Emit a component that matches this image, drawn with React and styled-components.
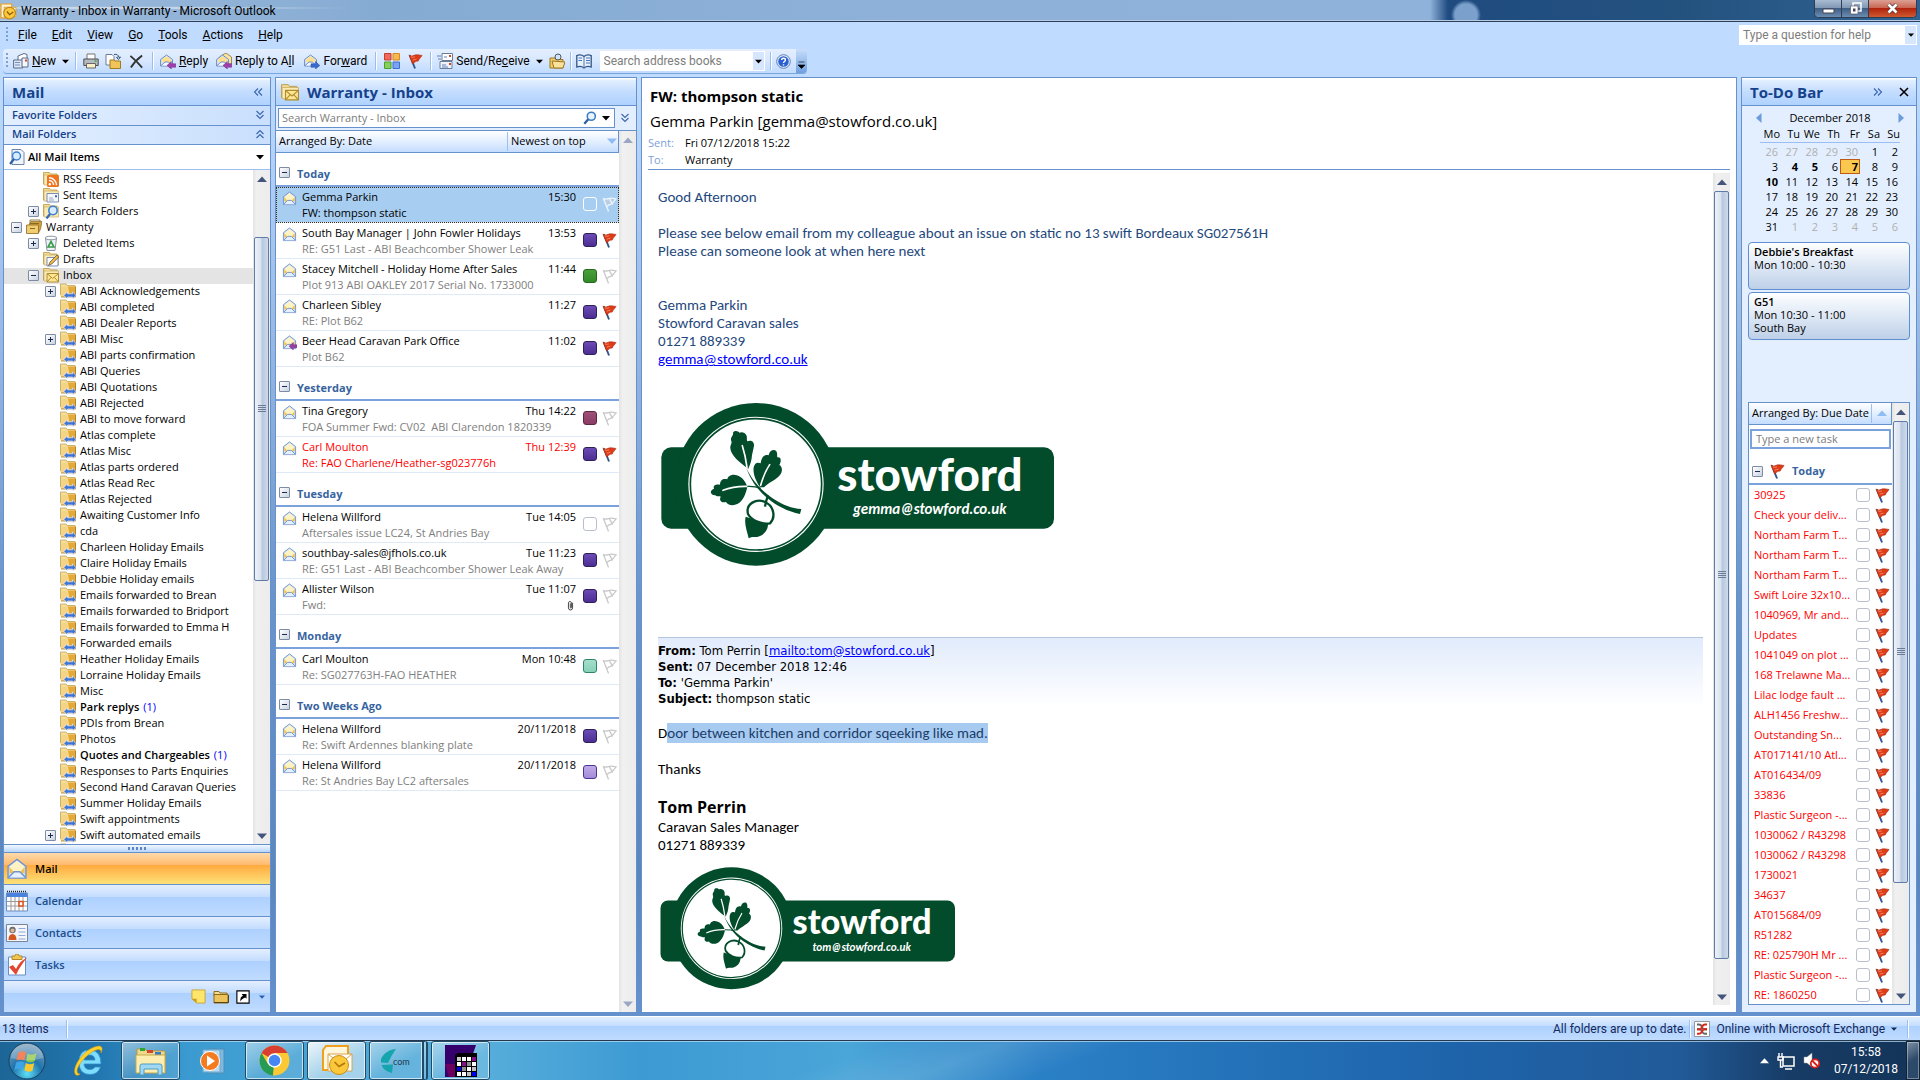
import styled, { createGlobalStyle, css } from 'styled-components'

const ui = '"Open Sans", "Noto Sans", sans-serif'
const chrome = 'Roboto, "Open Sans", sans-serif'
const calibri = 'Carlito, Lato, sans-serif'
const tahoma = '"DejaVu Sans Condensed", "DejaVu Sans", sans-serif'

const GlobalStyle = createGlobalStyle`
  * { box-sizing: border-box; }
  html, body, #root { height: 100%; margin: 0; }
  body { overflow: hidden; font: 11px/16px ${ui}; color: #000; }
  button, input { font: inherit; color: inherit; border: 0; padding: 0; margin: 0; background: none; }
  button { display: flex; align-items: center; cursor: pointer; white-space: nowrap; }
  ul { list-style: none; margin: 0; padding: 0; }
  h1, h2, h3, p { margin: 0; font-size: inherit; }
  svg { display: block; flex: none; }
`

/* ---------- data ---------- */

const menus = [['F', 'ile'], ['E', 'dit'], ['V', 'iew'], ['G', 'o'], ['T', 'ools'], ['A', 'ctions'], ['H', 'elp']]

const topFolders = [
  { name: 'RSS Feeds', icon: 'rss', level: 1 },
  { name: 'Sent Items', icon: 'sent', level: 1 },
  { name: 'Search Folders', icon: 'search', level: 1, toggle: '+' },
  { name: 'Warranty', icon: 'store', level: 0, toggle: '-' },
  { name: 'Deleted Items', icon: 'bin', level: 1, toggle: '+' },
  { name: 'Drafts', icon: 'drafts', level: 1 },
  { name: 'Inbox', icon: 'inbox', level: 1, toggle: '-', active: true },
]

const subFolders = [
  '+ABI Acknowledgements', 'ABI completed', 'ABI Dealer Reports', '+ABI Misc', 'ABI parts confirmation',
  'ABI Queries', 'ABI Quotations', 'ABI Rejected', 'ABI to move forward', 'Atlas complete', 'Atlas Misc',
  'Atlas parts ordered', 'Atlas Read Rec', 'Atlas Rejected', 'Awaiting Customer Info', 'cda',
  'Charleen Holiday Emails', 'Claire Holiday Emails', 'Debbie Holiday emails', 'Emails forwarded to Brean',
  'Emails forwarded to Bridport', 'Emails forwarded to Emma H', 'Forwarded emails', 'Heather Holiday Emails',
  'Lorraine Holiday Emails', 'Misc', 'Park replys|1', 'PDIs from Brean', 'Photos', 'Quotes and Chargeables|1',
  'Responses to Parts Enquiries', 'Second Hand Caravan Queries', 'Summer Holiday Emails',
  'Swift appointments', '+Swift automated emails', '',
].map((s) => {
  const [name, unread] = s.replace('+', '').split('|')
  return { name, unread, icon: 'shared', level: 2, toggle: s[0] === '+' ? '+' : null }
})

const folders = [...topFolders, ...subFolders]

const purple = ['#6c4bb5', '#4c2f93', '#30205a']
const green = ['#4aa03a', '#33882a', '#246a1e']
const plum = ['#a05078', '#8a3c64', '#5c2742']
const mint = ['#a4dfcb', '#86d2b8', '#2f8468']
const lilac = ['#c0abe8', '#a48ad8', '#4a3593']

const groups = [
  { title: 'Today', mails: [
    { from: 'Gemma Parkin', subject: 'FW: thompson static', time: '15:30', selected: true },
    { from: 'South Bay Manager | John Fowler Holidays', subject: 'RE: G51 Last - ABI Beachcomber Shower Leak', time: '13:53', cat: purple, flag: true },
    { from: 'Stacey Mitchell - Holiday Home After Sales', subject: 'Plot 913 ABI OAKLEY 2017 Serial No. 1733000', time: '11:44', cat: green },
    { from: 'Charleen Sibley', subject: 'RE: Plot B62', time: '11:27', cat: purple, flag: true },
    { from: 'Beer Head Caravan Park Office', subject: 'Plot B62', time: '11:02', cat: purple, flag: true, replied: true },
  ] },
  { title: 'Yesterday', mails: [
    { from: 'Tina Gregory', subject: 'FOA Summer Fwd: CV02  ABI Clarendon 1820339', time: 'Thu 14:22', cat: plum },
    { from: 'Carl Moulton', subject: 'Re: FAO Charlene/Heather-sg023776h', time: 'Thu 12:39', cat: purple, flag: true, overdue: true },
  ] },
  { title: 'Tuesday', mails: [
    { from: 'Helena Willford', subject: 'Aftersales issue LC24, St Andries Bay', time: 'Tue 14:05' },
    { from: 'southbay-sales@jfhols.co.uk', subject: 'RE: G51 Last - ABI Beachcomber Shower Leak Away', time: 'Tue 11:23', cat: purple },
    { from: 'Allister Wilson', subject: 'Fwd:', time: 'Tue 11:07', cat: purple, attachment: true },
  ] },
  { title: 'Monday', mails: [
    { from: 'Carl Moulton', subject: 'Re: SG027763H-FAO HEATHER', time: 'Mon 10:48', cat: mint },
  ] },
  { title: 'Two Weeks Ago', mails: [
    { from: 'Helena Willford', subject: 'Re: Swift Ardennes blanking plate', time: '20/11/2018', cat: purple },
    { from: 'Helena Willford', subject: 'Re: St Andries Bay LC2 aftersales', time: '20/11/2018', cat: lilac },
  ] },
]

const weeks = [
  [26, 27, 28, 29, 30, 1, 2],
  [3, 4, 5, 6, 7, 8, 9],
  [10, 11, 12, 13, 14, 15, 16],
  [17, 18, 19, 20, 21, 22, 23],
  [24, 25, 26, 27, 28, 29, 30],
  [31, 1, 2, 3, 4, 5, 6],
]
const busyDays = [4, 5, 7, 10]

const tasks = [
  '30925', 'Check your deliv...', 'Northam Farm T...', 'Northam Farm T...', 'Northam Farm T...',
  'Swift Loire 32x10...', '1040969, Mr and...', 'Updates', '1041049 on plot ...', '168 Trelawne Ma...',
  'Lilac lodge fault ...', 'ALH1456 Freshw...', 'Outstanding Sn...', 'AT017141/10 Atl...', 'AT016434/09',
  '33836', 'Plastic Surgeon -...', '1030062 / R43298', '1030062 / R43298', '1730021', '34637',
  'AT015684/09', 'R51282', 'RE: 025790H Mr ...', 'Plastic Surgeon -...', 'RE: 1860250',
]

/* ---------- icons ---------- */

const Icon = ({ size = 16, box = 16, children }) => (
  <svg width={size} height={size} viewBox={`0 0 ${box} ${box}`} aria-hidden="true">{children}</svg>
)

const Flag = ({ on = true, pale }) => (
  <Icon size={15}>
    {on ? (
      <>
        <path d="M2 1.500 7.500 15.500" stroke="#2d5590" strokeWidth="2" />
        <path d="M1 1c2 1.500 3.500 1.300 5.500.4S11 .8 15 1.600C13.500 4 12 4.900 10.800 7.600 9 7.300 7 8.500 5 10.800Z" fill="#df3b17" stroke="#a32a12" strokeWidth=".6" />
        <path d="M3 3c2 .8 3 .6 4.500 0M5 6.500c1.500 0 2.500-1 4-1" stroke="#f58a66" fill="none" />
      </>
    ) : (
      <path d="M1.500 1.500 7 15.500 M1 1.500c2.500 1.500 4 .8 5.500.2s4.500-.6 8.500.2C13.500 4 12 4.900 10.800 7.600 9 7.300 7 8 5 10.500M8 2l2.500 4.500" stroke={pale ? '#eef4fb' : '#c9c9c9'} strokeWidth="1.400" fill={pale ? '#b9cfe6' : 'none'} />
    )}
  </Icon>
)

const OpenMail = ({ size = 15, replied }) => (
  <Icon size={size}>
    <path d="M1.500 6 8 1l6.500 5v8.500h-13Z" fill="#cfe0f7" stroke="#6f94cf" />
    <path d="M3 6 8 2l5 4v4H3Z" fill="#fff3c4" />
    <path d="M2.500 6.500 5.500 10h5l3-3.500v4.500h-11Z" fill="#f2c14b" />
    <path d="M1.800 14.200 6 10h4l4.200 4.200" fill="#e6f0fd" stroke="#6f94cf" />
    {replied && <path d="M7.500 12 12 8v2.500h4v3h-4V16Z" fill="#9a3fa8" stroke="#6f2a80" strokeWidth=".5" />}
  </Icon>
)

const ActionMail = ({ kind }) => (
  <Icon>
    {kind === 'all' && <path d="M4 3.500 10 0l5.500 4v7H4Z" fill="#f8e3a0" stroke="#9c8a52" />}
    <path d="M.6 6.500 6.500 2l6 4.500V13H.6Z" fill="#dce9fa" stroke="#6d8cc0" />
    <path d="M2 6.500 6.500 3.200 11 6.500v2l-4.500 1.800L2 8.500Z" fill="#ffe08a" />
    <path d="M1 12.600 5 9h3.500l3.500 3.600" fill="#f4f8ff" stroke="#6d8cc0" />
    {kind === 'forward'
      ? <path d="M15.800 12.500 11.500 8.500v2.300H7v3.400h4.500V16Z" fill="#3a6bd0" stroke="#2148a0" strokeWidth=".5" />
      : <path d="M7 12.500 11.300 8.500v2.300h4.500v3.400h-4.500V16Z" fill="#a23fae" stroke="#6f2a80" strokeWidth=".5" />}
  </Icon>
)

const FolderBase = () => (
  <>
    <path d="M.5 1.500h6l1 1.500H14v10H.5Z" fill="#f3dd92" stroke="#b79847" strokeWidth=".8" />
    <path d="M1 4h14.500v10H1Z" fill="#f9ebb8" stroke="#c4a352" strokeWidth=".6" />
  </>
)

const FolderIcon = ({ kind, size = 16 }) => (
  <Icon size={size}>
    {kind === 'bin' ? (
      <>
        <path d="M2.500 3h11l-1.500 12.500H4Z" fill="#eef2f6" stroke="#8993a0" />
        <ellipse cx="8" cy="3" rx="5.800" ry="1.800" fill="#fff" stroke="#8993a0" />
        <path d="m8 6.500 3 5.500H5Z" fill="none" stroke="#3a9a48" strokeWidth="1.600" />
      </>
    ) : kind === 'store' ? (
      <>
        <path d="M4 1h10v4H4Z" fill="#fff" stroke="#8a7a48" />
        <path d="m3 6 2-3.500h11L14.500 10l-2 4Z" fill="#cfa140" stroke="#8a6a20" strokeWidth=".7" />
        <path d="M.5 6h12v8.500H.5Z" fill="#f0cd70" stroke="#8a6a20" strokeWidth=".8" />
        <path d="M4 9.500h5M4 4.500h9" stroke="#8a6a20" />
      </>
    ) : kind === 'plain' ? (
      <>
        <path d="M1 2.500h5l1 1.500h7v3H1Z" fill="#f6dd8c" stroke="#8c6a1c" />
        <path d="M1 5.500h14v8.500H1Z" fill="#edc35c" stroke="#8c6a1c" />
        <path d="M1 13.500h14.500V6" fill="none" stroke="#5a430e" />
      </>
    ) : (
      <>
        {kind !== 'shared' && <FolderBase />}
        {kind === 'shared' && (
          <>
            <path d="M.5 1h5.500l1 1.500h8V12H.5Z" fill="#f6e2a0" stroke="#b79847" strokeWidth=".7" />
            <path d="M1 3.500h14.500V14H1Z" fill="#f5d585" />
            <path d="M8 3.500h7.500V14H10Z" fill="#e3a93a" />
            <path d="M15.500 3.500V14H1" fill="none" stroke="#a8761c" strokeWidth=".8" />
            <path d="M3.800 12.500 7.500 8.800v2h5v-2l3.500 3.700-3.500 3.300v-1.800h-5v1.800Z" fill="#3f74d6" stroke="#f0f5fd" strokeWidth=".6" />
          </>
        )}
        {kind === 'rss' && (
          <>
            <rect x="4" y="4" width="12" height="12" rx="1.500" fill="#ee7420" />
            <circle cx="6.800" cy="13.200" r="1.200" fill="#fff" />
            <path d="M6 9.500a4.500 4.500 0 0 1 4.500 4.500M6 6.700a7.500 7.500 0 0 1 7.500 7.500" stroke="#fff" strokeWidth="1.400" fill="none" />
          </>
        )}
        {kind === 'sent' && (
          <>
            <path d="M4 6.500h11.500V15H4Z" fill="#f4f7fc" stroke="#7c8fae" />
            <path d="M12 8.200h2v2h-2Z" fill="#3c64b4" />
            <path d="M6 11h4M6 13h5" stroke="#9aa9c2" />
          </>
        )}
        {kind === 'inbox' && (
          <>
            <path d="M4 6.500h11.500V15H4Z" fill="#ffe795" stroke="#b08c2c" />
            <path d="m4 6.500 5.700 5 5.800-5M4 15l4-4.500M15.500 15l-4-4.500" fill="none" stroke="#b08c2c" />
          </>
        )}
        {kind === 'drafts' && (
          <>
            <path d="M4 6.500h11V15H4Z" fill="#fff" stroke="#7c8fae" />
            <path d="M5.500 14.500 7 11l7-7 1.800 2-7 7Z" fill="#f0b840" stroke="#4a4a4a" strokeWidth=".7" />
          </>
        )}
        {kind === 'search' && (
          <>
            <circle cx="10" cy="7.500" r="4.200" fill="#d8ecff" stroke="#3e82cf" strokeWidth="1.600" />
            <path d="m7 11-3.500 4.500" stroke="#3567b5" strokeWidth="2.200" />
          </>
        )}
      </>
    )}
  </Icon>
)

const Chevrons = ({ dir = 'left', color = '#3b66a8' }) => {
  const turn = { left: 0, up: 90, right: 180, down: 270 }[dir]
  return (
    <svg width="10" height="10" viewBox="0 0 10 10" aria-hidden="true">
      <path d="M5 1.500 1.500 5 5 8.500M9 1.500 5.500 5 9 8.500" transform={`rotate(${turn} 5 5)`} fill="none" stroke={color} strokeWidth="1.100" />
    </svg>
  )
}

const Arrow = ({ dir = 'down', color = '#000', w = 7 }) => {
  const d = { down: 'M0 2.500h10L5 8Z', up: 'M0 8h10L5 2.500Z', left: 'M7.500 0v10L2 5Z', right: 'M2.500 0v10L8 5Z' }[dir]
  return <svg width={w} height={w} viewBox="0 0 10 10" aria-hidden="true"><path d={d} fill={color} /></svg>
}

const Lens = () => (
  <Icon size={14}>
    <circle cx="9.500" cy="6" r="4.600" fill="#e8f4ff" stroke="#3d7cc4" strokeWidth="1.800" />
    <path d="m6 9.500-4.500 5" stroke="#2f5fa6" strokeWidth="2.600" />
  </Icon>
)

const Crest = ({ width, email }) => (
  <svg width={width} viewBox="54 60 1200 507" role="img" aria-label={`stowford ${email}`}>
    <rect x="64" y="202" width="1178" height="244" rx="30" fill="#024b2b" />
    <circle cx="348" cy="313" r="244" fill="#024b2b" />
    <circle cx="348" cy="313" r="203" fill="#fff" />
    <circle cx="348" cy="313" r="197" fill="none" stroke="#024b2b" strokeWidth="5" />
    <g fill="#024b2b">
      <path d="M325 266C300 250 272 225 271 205 270 195 278 190 273 180 272 168 281 168 279 158 282 150 296 153 298 158 305 154 318 158 320 168 322 175 319 178 322 184 335 178 343 186 342 197 340 210 335 225 335 235 333 250 328 258 325 266Z" />
      <path d="M360 322C350 305 338 285 341 262 345 248 352 246 362 250 364 235 370 222 386 226 388 212 400 207 408 212 414 220 410 226 412 232 422 230 426 240 418 255 428 260 428 275 420 285 405 302 385 308 372 322Z" />
      <path d="M322 320C315 300 300 285 285 285 275 282 262 290 262 298 250 294 240 300 240 314 228 312 218 316 222 326 208 332 210 344 226 346 232 352 238 346 242 350 236 362 246 370 258 366 262 376 280 378 292 372 310 362 318 340 322 320Z" />
      <path d="M318 262C340 310 370 335 400 356 430 376 455 384 484 387L480 402C450 396 418 382 394 364 364 342 335 310 318 262Z" />
      <path d="M317 410C312 430 320 450 326 475 335 468 350 474 360 468 378 460 384 445 384 432Z" />
    </g>
    <g fill="none" stroke="#fff" strokeWidth="5" strokeLinecap="round">
      <path d="M307 197Q316 225 321 262" />
      <path d="M389 254Q372 280 362 316" />
      <path d="M249 331Q280 318 322 319" />
    </g>
    <path d="M322 319Q345 318 362 325" fill="none" stroke="#024b2b" strokeWidth="4" />
    <path d="M324 402C316 370 350 355 375 366 402 378 408 412 390 430 365 434 335 422 324 402Z" fill="#fff" stroke="#024b2b" strokeWidth="7" />
    <path d="M384 346Q378 362 375 380" fill="none" stroke="#024b2b" strokeWidth="7" />
    <text x="870" y="334" textAnchor="middle" fill="#fff" fontFamily="Lato, sans-serif" fontWeight="900" fontSize="137">stowford</text>
    <text x="869" y="403" textAnchor="middle" fill="#fff" fontFamily={calibri} fontWeight="700" fontStyle="italic" fontSize="45">{email}</text>
  </svg>
)

/* ---------- window frame ---------- */

const Window = styled.div`
  display: flex;
  flex-direction: column;
  height: 100vh;
  background: #bfdbff;
`

const TitleBar = styled.header`
  display: flex;
  align-items: flex-start;
  justify-content: space-between;
  height: 22px;
  padding-right: 3px;
  border-bottom: 1px solid #2b3f5c;
  box-shadow: inset 0 -1px 0 #b7cce4;
  background:
    radial-gradient(circle at 1466px 15px, #7ba0cb 0 11px, transparent 15px),
    radial-gradient(ellipse at 120px 8px, rgba(255, 255, 255, .7), transparent 240px),
    linear-gradient(90deg, #9dbbdc 0, #86abd3 380px, #8db1d8 900px, #8fb2da 1430px, #1f4b80 1448px, #24527f 1680px, #2f6292 100%);
  font: 12px/18px ${chrome};
`

const Title = styled.h1`
  display: flex;
  align-items: center;
  gap: 4px;
  padding-top: 2px;
  font-weight: 400;
`

const WindowButtons = styled.div`
  display: flex;
  height: 18px;
  border: 1px solid #2e3d52;
  border-top: 0;
  border-radius: 0 0 5px 5px;
  overflow: hidden;
  box-shadow: inset 0 0 0 1px #b3c4d8;
`

const WindowButton = styled.button`
  justify-content: center;
  width: ${(p) => (p.$close ? 47 : 27)}px;
  border-right: ${(p) => (p.$close ? 0 : 1)}px solid #2e3d52;
  background: ${(p) => (p.$close
    ? 'linear-gradient(#dda095, #c8634f 48%, #b1230c 50%, #cf5a32)'
    : 'linear-gradient(#a9bcd2, #7f97b3 48%, #3f5f86 50%, #6c8db2)')};
`

const MenuRow = styled.div`
  display: flex;
  align-items: center;
  justify-content: space-between;
  height: 27px;
  padding: 0 3px 2px 6px;
  font: 12px/16px ${chrome};
`

const Menu = styled.nav`
  display: flex;
  align-items: center;
  gap: 15px;
`

const Grip = styled.span`
  width: 2px;
  height: 16px;
  margin-right: ${(p) => p.$gap || 0}px;
  background: repeating-linear-gradient(#7ba1d8 0 2px, transparent 2px 4px);
`

const HelpBox = styled.div`
  display: flex;
  width: 178px;
  height: 20px;
  padding: 1px;
  background: #fff;
`

const PlainInput = styled.input`
  flex: 1;
  min-width: 0;
  padding: 0 3px;
  outline: 0;
  &::placeholder { color: #7d7d7d; opacity: 1; }
`

const DropButton = styled.button`
  justify-content: center;
  width: 11px;
  background: #d6e6fc;
`

const ToolRow = styled.div`
  display: flex;
  padding: 0 4px 3px 3px;
  font: 12px/16px ${chrome};
`

const Toolbar = styled.div`
  display: flex;
  align-items: center;
  height: 25px;
  padding-left: 3px;
  border-radius: 4px;
  border-bottom: 1px solid #7aa5dd;
  background: linear-gradient(#e4efff, #d8e8ff 45%, #c0dbff);
`

const Tool = styled.button`
  gap: 3px;
  height: 22px;
  margin: 0 ${(p) => p.$m || 3}px;
`

const Sep = styled.span`
  width: 2px;
  height: 18px;
  margin: 0 3px;
  border-left: 1px solid #9abfee;
  border-right: 1px solid #fff;
`

const AddressBox = styled(HelpBox)`
  width: 165px;
  margin: 0 2px 0 7px;
`

const Overflow = styled.button`
  justify-content: center;
  align-self: stretch;
  width: 11px;
  margin-left: 4px;
  padding-top: 8px;
  border-radius: 0 4px 4px 0;
  background: linear-gradient(#c9defb, #6f9fdf);
`

const Panes = styled.main`
  flex: 1;
  min-height: 0;
  display: grid;
  grid-template-columns: 268px 362px minmax(0, 1fr) 176px;
  gap: 4px;
  padding: 0 3px 4px;
  background: linear-gradient(#bfdbff, #9cbce6 25%, #6b94cb 55%, #5b85bd 85%, #6591cd);
`

const Pane = styled.section`
  display: flex;
  flex-direction: column;
  min-width: 0;
  min-height: 0;
  border: 1px solid #6591cd;
  border-bottom: 0;
  background: ${(p) => p.$bg || '#fff'};
`

const PaneHead = styled.header`
  display: flex;
  align-items: center;
  gap: 8px;
  height: 28px;
  flex: none;
  padding: 0 7px 0 ${(p) => p.$left || 8}px;
  border-bottom: 1px solid #6591cd;
  background: linear-gradient(#fff 0 1px, #e3efff 2px, #c4ddff 50%, #afd2ff);
`

const PaneTitle = styled.h2`
  flex: 1;
  color: #15428b;
  font: 700 15px/20px ${ui};
`

/* ---------- scroll bars ---------- */

const Track = styled.div`
  display: flex;
  flex-direction: column;
  align-items: stretch;
  width: 17px;
  flex: none;
  background: linear-gradient(90deg, #e3e3e3, #f0f0f0 20%, #ececec);
`

const TrackButton = styled.button`
  justify-content: center;
  height: 17px;
  flex: none;
`

const Room = styled.div`
  flex: ${(p) => p.$grow} 0 0;
`

const Thumb = styled.div`
  display: flex;
  align-items: center;
  justify-content: center;
  flex: ${(p) => p.$grow} 0 0;
  margin: 0 1px;
  border: 1px solid #5f7ba6;
  border-radius: 2px;
  background: linear-gradient(90deg, #eef2f8, #d9e2ef 45%, #b6c7de 55%, #cfdbec);
  &::after {
    content: '';
    width: 8px;
    height: 8px;
    background: repeating-linear-gradient(#6c7c96 0 1px, transparent 1px 2px);
  }
`

const ScrollBar = ({ sizes }) => (
  <Track>
    <TrackButton aria-label="Scroll up"><Arrow dir="up" w={10} color={sizes ? '#44547a' : '#9aa6c4'} /></TrackButton>
    {sizes ? (
      <>
        <Room $grow={sizes[0]} />
        <Thumb $grow={sizes[1]} />
        <Room $grow={sizes[2]} />
      </>
    ) : <Room $grow={1} />}
    <TrackButton aria-label="Scroll down"><Arrow w={10} color={sizes ? '#44547a' : '#9aa6c4'} /></TrackButton>
  </Track>
)

/* ---------- navigation pane ---------- */

const SectionBar = styled.button`
  justify-content: space-between;
  height: ${(p) => p.$h}px;
  flex: none;
  padding: 0 5px 2px 8px;
  border-bottom: 1px solid #6591cd;
  background: linear-gradient(90deg, #e3efff, #c9dffd);
  color: #15428b;
  font-weight: 600;
`

const ViewPicker = styled.button`
  gap: 3px;
  height: 25px;
  flex: none;
  padding: 0 6px 0 5px;
  border-bottom: 1px solid #9abff0;
  font-weight: 600;
`

const Grow = styled.span`
  flex: 1;
  text-align: left;
`

const Split = styled.div`
  display: flex;
  flex: 1;
  min-height: 0;
`

const Tree = styled.ul`
  flex: 1;
  padding-top: 2px;
  overflow: hidden;
`

const Folder = styled.li`
  display: flex;
  align-items: center;
  gap: 4px;
  height: 16px;
  padding: 0 0 2px ${(p) => 7 + p.$level * 17}px;
  white-space: nowrap;
  font-weight: ${(p) => (p.$bold ? 600 : 400)};
  ${(p) => p.$active && css`background: #e4e4e4;`}
`

const Toggle = styled.button`
  justify-content: center;
  width: 11px;
  height: 11px;
  flex: none;
  border: 1px solid #7d8ba5;
  border-radius: 1px;
  background: linear-gradient(135deg, #fff, #c9d3e2);
  color: #1b2c4c;
`

const NoToggle = styled.span`
  width: 11px;
`

const Unread = styled.span`
  color: #00f;
  font-weight: 400;
`

const Splitter = styled.div`
  display: flex;
  justify-content: center;
  align-items: center;
  height: 9px;
  flex: none;
  border-top: 1px solid #6591cd;
  border-bottom: 1px solid #6591cd;
  background: linear-gradient(#f2f8ff, #b8d5fc);
  &::after {
    content: '';
    width: 18px;
    height: 3px;
    background: repeating-linear-gradient(90deg, #5e86c4 0 2px, transparent 2px 4px);
  }
`

const NavButton = styled.button`
  gap: 7px;
  height: 32px;
  flex: none;
  padding-left: 2px;
  border-bottom: 1px solid #6591cd;
  font-weight: 600;
  color: ${(p) => (p.$active ? '#000' : '#204d89')};
  background: ${(p) => (p.$active
    ? 'linear-gradient(#ffd9aa, #ffbb6e 38%, #ffab3f 40%, #fee17a)'
    : 'linear-gradient(#e3efff, #c4ddff 38%, #add1ff 40%, #c0dbff)')};
`

const NavFoot = styled.div`
  display: flex;
  align-items: center;
  justify-content: flex-end;
  gap: 7px;
  height: 31px;
  flex: none;
  padding-right: 5px;
  background: linear-gradient(#e3efff, #c4ddff 38%, #add1ff 40%, #c0dbff);
  button:last-child { margin-left: 2px; }
`

const MinusBox = ({ sign = '-' }) => (
  <Toggle aria-label={sign === '-' ? 'Collapse' : 'Expand'}>
    <svg width="7" height="7" viewBox="0 0 7 7" aria-hidden="true">
      <path d={sign === '-' ? 'M1 3.500h5' : 'M1 3.500h5M3.500 1v5'} stroke="#1b2c4c" />
    </svg>
  </Toggle>
)

const NavigationPane = () => (
  <Pane>
    <PaneHead>
      <PaneTitle>Mail</PaneTitle>
      <button aria-label="Minimize the Navigation Pane"><Chevrons /></button>
    </PaneHead>
    <SectionBar $h={20}>Favorite Folders<Chevrons dir="down" /></SectionBar>
    <SectionBar $h={19}>Mail Folders<Chevrons dir="up" /></SectionBar>
    <ViewPicker>
      <Icon>
        <path d="M3 .5h9l3 3v12H3Z" fill="#f1f5fb" stroke="#6f84a8" />
        <circle cx="7.500" cy="7" r="4" fill="#d8ecff" stroke="#3e82cf" strokeWidth="1.500" />
        <path d="m5 10-4 5" stroke="#2f5fa6" strokeWidth="2.200" />
      </Icon>
      <Grow>All Mail Items</Grow>
      <Arrow w={8} />
    </ViewPicker>
    <Split>
      <Tree>
        {folders.map((f) => (
          <Folder key={f.name} $level={f.level} $active={f.active} $bold={f.unread}>
            {f.toggle ? <MinusBox sign={f.toggle} /> : <NoToggle />}
            <FolderIcon kind={f.icon} />
            {f.name}
            {f.unread && <Unread>({f.unread})</Unread>}
          </Folder>
        ))}
      </Tree>
      <ScrollBar sizes={[50, 344, 247]} />
    </Split>
    <Splitter />
    <NavButton $active>
      <OpenMail size={22} />
      Mail
    </NavButton>
    <NavButton>
      <Icon size={22} box={22}>
        <path d="M.5 3h21v18H.5Z" fill="#fff" stroke="#6d8cc0" />
        <path d="M1 3h20v4H1Z" fill="#4b82dc" />
        <path d="M1 1.500h20" stroke="#222" strokeWidth="1.500" strokeDasharray="1 1" />
        <path d="M1 11.500h20M1 16h20M5 7v14M9 7v14M13 7v14M17 7v14" stroke="#9a9a9a" />
        <path d="M13 11.500h4V16h-4Z" fill="#fff" stroke="#e0501c" strokeWidth="1.500" />
      </Icon>
      Calendar
    </NavButton>
    <NavButton>
      <Icon size={22} box={22}>
        <path d="M.5 2.500h21v17H.5Z" fill="#f3f6fb" stroke="#7a8496" />
        <circle cx="6.500" cy="8" r="3.200" fill="#6b6b6b" />
        <circle cx="6.500" cy="8.500" r="2" fill="#d8b79a" />
        <path d="M2.500 18c0-4 1.500-6 4-6s4 2 4 6Z" fill="#d4571f" />
        <path d="M12.500 6.500h7M12.500 10h7M12.500 13.500h7M12.500 17h7" stroke="#8fa9d8" />
      </Icon>
      Contacts
    </NavButton>
    <NavButton>
      <Icon size={22} box={22}>
        <path d="M2.500 3h17v18h-17Z" fill="#fff" stroke="#6d8cc0" />
        <path d="M6 2h3a2 2 0 0 1 4 0h3v3.500H6Z" fill="#f3c651" stroke="#b58a24" />
        <path d="m3 13 4-2 3 4C12 10 16 6 21 3.500 17 9 13 14 10 21Z" fill="#e4452e" />
      </Icon>
      Tasks
    </NavButton>
    <NavFoot>
      <button aria-label="Notes">
        <Icon size={15}>
          <path d="M1 1h14v14H6L1 10.500Z" fill="#ffe66b" stroke="#c7a53a" />
          <path d="M1 10.500h5V15Z" fill="#c99a20" />
        </Icon>
      </button>
      <button aria-label="Folder List"><FolderIcon kind="plain" /></button>
      <button aria-label="Shortcuts">
        <Icon size={14}>
          <path d="M1 1h14v14H1Z" fill="#fff" stroke="#000" strokeWidth="1.300" />
          <path d="M5 13c-.5-4 1-5.500 3-6.500L6.500 4.500H12V10l-1.500-1.500C8 9.500 6.500 10.500 5 13Z" fill="#000" />
        </Icon>
      </button>
      <button aria-label="Configure buttons"><Arrow w={6} color="#2b5ea8" /></button>
    </NavFoot>
  </Pane>
)

/* ---------- message list ---------- */

const SearchRow = styled.div`
  display: flex;
  align-items: center;
  gap: 5px;
  height: 25px;
  flex: none;
  padding: 0 6px 1px 2px;
  border-bottom: 1px solid #6591cd;
  background: #e3efff;
`

const SearchBox = styled.div`
  display: flex;
  align-items: center;
  gap: 5px;
  flex: 1;
  height: 20px;
  padding-right: 4px;
  border: 1px solid #6591cd;
  background: #fff;
`

const List = styled.div`
  flex: 1;
  min-width: 0;
`

const SortBar = styled.div`
  display: flex;
  align-items: center;
  height: 22px;
  border-bottom: 1px solid #6591cd;
  border-right: 1px solid #6591cd;
  background: linear-gradient(#fff, #e3efff 50%, #c4ddff);
  padding-left: 3px;
`

const SortButton = styled.button`
  justify-content: space-between;
  height: 19px;
  padding: 0 1px 2px ${(p) => p.$pad || 0}px;
  ${(p) => p.$line && css`
    width: ${p.$line}px;
    border-left: 1px solid #9abff0;
  `}
  ${(p) => p.$grow && css`flex: 1;`}
`

const GroupHead = styled.h3`
  display: flex;
  align-items: flex-end;
  gap: 7px;
  height: 34px;
  padding: 0 0 4px 3px;
  border-bottom: 2px solid #7ba2dc;
  color: #3764a0;
  font: 700 11px/14px ${ui};

  button { margin-bottom: 3px; }
`

const Mail = styled.li`
  display: flex;
  height: 36px;
  padding: 2px 2px 0 6px;
  gap: 5px;
  border-bottom: 1px solid #dfeaf8;
  ${(p) => p.$selected && css`
    background: #a7cdf0;
    outline: 1px dotted #3c2c1c;
    outline-offset: -1px;
  `}
`

const MailIcon = styled.span`
  padding-top: 2px;
`

const MailText = styled.div`
  flex: 1;
  min-width: 0;
  white-space: pre;
`

const MailLine = styled.div`
  display: flex;
  align-items: center;
  justify-content: space-between;
  height: 16px;
  color: ${(p) => p.$color || '#000'};
`

const Marks = styled.div`
  display: flex;
  gap: 5px;
  padding: 8px 0 0 2px;
`

const Category = styled.button`
  width: 14px;
  height: 14px;
  border: 1px solid ${(p) => (p.$c ? p.$c[2] : p.$pale ? '#fff' : '#b9bfcc')};
  border-radius: 3px;
  background: ${(p) => (p.$c ? `linear-gradient(${p.$c[0]}, ${p.$c[1]})` : 'transparent')};
`

const FlagButton = styled.button`
  height: 14px;
`

const MessageList = () => (
  <Pane>
    <PaneHead $left={5}>
      <FolderIcon kind="inbox" size={18} />
      <PaneTitle>Warranty - Inbox</PaneTitle>
    </PaneHead>
    <SearchRow>
      <SearchBox>
        <PlainInput aria-label="Search Warranty - Inbox" placeholder="Search Warranty - Inbox" />
        <button aria-label="Search"><Lens /></button>
        <button aria-label="Search options"><Arrow w={8} /></button>
      </SearchBox>
      <button aria-label="Expand the Query Builder"><Chevrons dir="down" /></button>
    </SearchRow>
    <Split>
      <List>
        <SortBar>
          <SortButton $grow>Arranged By: Date</SortButton>
          <SortButton $line={111} $pad={3}>Newest on top<Arrow w={10} color="#8fbcf5" /></SortButton>
        </SortBar>
        {groups.map((g) => (
          <div key={g.title}>
            <GroupHead><MinusBox />{g.title}</GroupHead>
            <ul>
              {g.mails.map((m) => (
                <Mail key={m.from + m.subject} $selected={m.selected}>
                  <MailIcon><OpenMail replied={m.replied} /></MailIcon>
                  <MailText>
                    <MailLine $color={m.overdue && '#f00'}><span>{m.from}</span><span>{m.time}</span></MailLine>
                    <MailLine $color={m.overdue ? '#f00' : m.selected ? '#000' : '#808080'}>
                      <span>{m.subject}</span>
                      {m.attachment && (
                        <Icon size={11}>
                          <path d="M11 4v7.500a3 3 0 0 1-6 0V4a2.200 2.200 0 0 1 4.300 0v7a.8.8 0 0 1-1.600 0V5" fill="none" stroke="#333" strokeWidth="1.300" />
                        </Icon>
                      )}
                    </MailLine>
                  </MailText>
                  <Marks>
                    <Category aria-label="Category" $c={m.cat} $pale={m.selected} />
                    <FlagButton aria-label="Flag"><Flag on={!!m.flag} pale={m.selected} /></FlagButton>
                  </Marks>
                </Mail>
              ))}
            </ul>
          </div>
        ))}
      </List>
      <ScrollBar />
    </Split>
  </Pane>
)

/* ---------- reading pane ---------- */

const MessageHead = styled.header`
  flex: none;
  height: 92px;
  margin: 0 6px;
  padding-top: 6px;
  border-bottom: 1px solid #6591cd;
`

const Subject = styled.h2`
  padding-left: 2px;
  font: 700 15px/24px ${ui};
`

const Sender = styled.p`
  padding-left: 2px;
  font: 15px/26px ${ui};
`

const Meta = styled.p`
  display: flex;
  line-height: 17px;
`

const MetaLabel = styled.span`
  width: 37px;
  color: #7ba0dc;
`

const MessageSplit = styled(Split)`
  padding: 3px 6px 7px 0;
`

const Body = styled.article`
  flex: 1;
  min-width: 0;
  overflow: hidden;
  padding: 15px 10px 0 16px;
  font: 15px/18px ${calibri};
  a { color: #00f; }
`

const Intro = styled.div`
  color: #1f497d;
  margin-bottom: 32px;
  white-space: pre-line;
`

const Quoted = styled.div`
  margin: 68px 0 17px;
  padding-top: 5px;
  border-top: 1px solid #b5c4df;
  background: linear-gradient(#e1ebfc, #fff);
  font: 13px/16px ${tahoma};
`

const Marked = styled.span`
  padding: 1px 0;
  background: #a7cbf0;
  color: #1b3d6b;
`

const Para = styled.p`
  margin-bottom: 18px;
`

const SignOff = styled.p`
  font: 700 16px/22px ${ui};
`

const Details = styled.p`
  margin-bottom: 11px;
`

const ReadingPane = () => (
  <Pane>
    <MessageHead>
      <Subject>FW: thompson static</Subject>
      <Sender>Gemma Parkin [gemma@stowford.co.uk]</Sender>
      <Meta><MetaLabel>Sent:</MetaLabel>Fri 07/12/2018 15:22</Meta>
      <Meta><MetaLabel>To:</MetaLabel>Warranty</Meta>
    </MessageHead>
    <MessageSplit>
      <Body>
        <Intro>
          {'Good Afternoon\n\nPlease see below email from my colleague about an issue on static no 13 swift Bordeaux SG027561H\nPlease can someone look at when here next\n\n\nGemma Parkin\nStowford Caravan sales\n01271 889339\n'}
          <a href="mailto:gemma@stowford.co.uk">gemma@stowford.co.uk</a>
        </Intro>
        <Crest width={400} email="gemma@stowford.co.uk" />
        <Quoted>
          <p><b>From:</b> Tom Perrin [<a href="mailto:tom@stowford.co.uk">mailto:tom@stowford.co.uk</a>]</p>
          <p><b>Sent:</b> 07 December 2018 12:46</p>
          <p><b>To:</b> 'Gemma Parkin'</p>
          <p><b>Subject:</b> thompson static</p>
        </Quoted>
        <Para>D<Marked>oor between kitchen and corridor sqeeking like mad.</Marked></Para>
        <Para>Thanks</Para>
        <SignOff>Tom Perrin</SignOff>
        <Details>Caravan Sales Manager<br />01271 889339</Details>
        <Crest width={300} email="tom@stowford.co.uk" />
      </Body>
      <ScrollBar sizes={[1, 770, 29]} />
    </MessageSplit>
  </Pane>
)

/* ---------- to-do bar ---------- */

const MonthBar = styled.div`
  display: flex;
  align-items: center;
  justify-content: space-between;
  padding: 4px 10px 0 12px;
`

const Month = styled.table`
  width: 140px;
  margin: 0 0 8px 18px;
  border-collapse: collapse;
  table-layout: fixed;
  th { height: 16px; padding: 0 0 1px; font-weight: 400; text-align: right; line-height: 15px; }
  thead { border-bottom: 1px solid #9abff0; }
  tbody::before { content: ''; display: block; height: 1px; }
`

const Day = styled.td`
  height: 15px;
  padding: 0 2px 1px 0;
  text-align: right;
  line-height: 13px;
  color: ${(p) => (p.$dim ? '#b0b0b0' : '#000')};
  font-weight: ${(p) => (p.$busy ? 700 : 400)};
  ${(p) => p.$today && css`
    background: #fbc84f;
    box-shadow: inset 0 0 0 1px #c05a12;
  `}
`

const Appointment = styled.div`
  height: 48px;
  flex: none;
  margin: 0 6px 2px;
  padding: 2px 5px;
  border: 1px solid #5f8fd2;
  border-radius: 4px;
  background: linear-gradient(#fdfeff, #dbe6f4 55%, #bed0e8);
  line-height: 13px;
  b { font-weight: 600; }
`

const TaskPanel = styled.div`
  display: flex;
  flex: 1;
  min-height: 0;
  margin: 60px 6px 7px;
  border: 1px solid #6591cd;
  background: #fff;
`

const TaskInput = styled.input`
  display: block;
  width: calc(100% - 2px);
  height: 20px;
  margin: 4px 1px 0;
  padding: 0 4px 1px;
  border: 2px solid #7ba2dc;
  outline: 0;
  &::placeholder { color: #7d7d7d; opacity: 1; }
`

const TaskHead = styled(GroupHead)`
  align-items: center;
  height: 36px;
  padding: 10px 0 0 3px;
  button { margin-bottom: 0; }
`

const Task = styled.li`
  display: flex;
  align-items: center;
  gap: 5px;
  height: 20px;
  padding: 0 2px 0 5px;
  color: #f00;
  white-space: nowrap;
`

const TaskName = styled.span`
  flex: 1;
  min-width: 0;
  overflow: hidden;
`

const TodoBar = () => (
  <Pane $bg="#e3efff">
    <PaneHead>
      <PaneTitle>To-Do Bar</PaneTitle>
      <button aria-label="Minimize the To-Do Bar"><Chevrons dir="right" /></button>
      <button aria-label="Close">
        <svg width="18" height="10" viewBox="0 0 18 10" aria-hidden="true"><path d="m9 1 8 8M17 1 9 9" stroke="#000" strokeWidth="1.600" /></svg>
      </button>
    </PaneHead>
    <MonthBar>
      <button aria-label="Previous month"><Arrow dir="left" w={10} color="#6a9bdc" /></button>
      December 2018
      <button aria-label="Next month"><Arrow dir="right" w={10} color="#6a9bdc" /></button>
    </MonthBar>
    <Month>
      <thead>
        <tr>{['Mo', 'Tu', 'We', 'Th', 'Fr', 'Sa', 'Su'].map((d) => <th key={d}>{d}</th>)}</tr>
      </thead>
      <tbody>
        {weeks.map((week, i) => (
          <tr key={i}>
            {week.map((d) => {
              const dim = (i === 0 && d > 20) || (i === 5 && d < 20)
              return <Day key={d} $dim={dim} $busy={!dim && busyDays.includes(d)} $today={!dim && d === 7}>{d}</Day>
            })}
          </tr>
        ))}
      </tbody>
    </Month>
    <Appointment><b>Debbie's Breakfast</b><br />Mon 10:00 - 10:30</Appointment>
    <Appointment><b>G51</b><br />Mon 10:30 - 11:00<br />South Bay</Appointment>
    <TaskPanel>
      <List>
        <SortBar>
          <SortButton $grow>Arranged By: Due Date</SortButton>
          <SortButton $line={20} $pad={5}><Arrow dir="up" w={10} color="#8fbcf5" /></SortButton>
        </SortBar>
        <TaskInput aria-label="Type a new task" placeholder="Type a new task" />
        <TaskHead><MinusBox /><Flag /><span>Today</span></TaskHead>
        <ul>
          {tasks.map((t, i) => (
            <Task key={i}>
              <TaskName>{t}</TaskName>
              <Category aria-label="Category" />
              <button aria-label="Mark complete"><Flag /></button>
            </Task>
          ))}
        </ul>
      </List>
      <ScrollBar sizes={[1, 463, 105]} />
    </TaskPanel>
  </Pane>
)

/* ---------- status bar and taskbar ---------- */

const StatusBar = styled.footer`
  display: flex;
  align-items: center;
  height: 24px;
  flex: none;
  padding: 0 8px 0 2px;
  border-top: 1px solid #fff;
  background: linear-gradient(#e3efff, #c4ddff 38%, #add1ff 40%, #c0dbff);
  color: #15285a;
  font: 12px/16px ${chrome};
`

const ItemCount = styled.span`
  width: 61px;
`

const StatusButton = styled.button`
  gap: 6px;
  margin-right: 7px;
`

const TaskBar = styled.footer`
  display: flex;
  align-items: stretch;
  height: 40px;
  flex: none;
  border-top: 1px solid #24384e;
  box-shadow: inset 0 1px 0 rgba(190, 225, 250, .7);
  background:
    linear-gradient(160deg, transparent 44%, rgba(255, 255, 255, .12) 50%, transparent 56%),
    linear-gradient(90deg, #1c6596 0, #2277b0 100px, #3b9bd0 190px, #57aedb 480px, #3d9ad3 640px, #4aa5d8 850px, #2a80c6 1040px, #1e64ab 1450px, #215a98 1680px, #173c66 1790px, #143458 100%);
  color: #fff;
`

const StartButton = styled.button`
  justify-content: center;
  width: 54px;
  margin-right: 5px;
`

const AppButton = styled.button`
  justify-content: center;
  width: 59px;
  margin-right: 3px;
  ${(p) => p.$open && css`
    border: 1px solid #1f4a68;
    border-radius: 3px;
    box-shadow: inset 0 0 0 1px rgba(255, 255, 255, .65);
    background: linear-gradient(150deg, rgba(255, 255, 255, ${p.$lit ? 0.9 : 0.5}), rgba(255, 255, 255, ${p.$lit ? 0.5 : 0.12}) 60%);
  `}
  ${(p) => p.$stack && css`
    border-right-width: 6px;
    border-right-style: double;
  `}
`

const Tray = styled.div`
  display: flex;
  align-items: center;
  gap: 8px;
  margin-left: auto;
`

const Clock = styled.time`
  width: 76px;
  text-align: center;
  font: 12px/17px ${chrome};
`

const ShowDesktop = styled.button`
  align-self: stretch;
  width: 14px;
  margin-left: -6px;
  border: 1px solid #0e2238;
  box-shadow: inset 0 0 0 1px rgba(255, 255, 255, .35);
  background: linear-gradient(150deg, rgba(255, 255, 255, .45), rgba(255, 255, 255, .1) 50%);
`

const keypad = [
  '#c8c8c8', '#fff', '#fff', '#8a108a',
  '#fff', '#8a108a', '#909090', '#fff',
  '#0000f0', '#909090', '#fff', '#c0c0c0',
  '#fff', '#fff', '#c0c0c0', '#0000f0',
]

const WindowsTaskBar = () => (
  <TaskBar>
    <StartButton aria-label="Start">
      <Icon size={38} box={38}>
        <defs>
          <radialGradient id="orb" cx=".5" cy=".85" r=".9">
            <stop offset="0" stopColor="#5fe0f8" />
            <stop offset=".45" stopColor="#1f74ac" />
            <stop offset="1" stopColor="#8fa9be" />
          </radialGradient>
        </defs>
        <circle cx="19" cy="19" r="18" fill="url(#orb)" stroke="#17405f" />
        <path d="M10 11q4-3 8-.5l-1.500 8q-4-2.200-8.200.3Z" fill="#ee5a24" />
        <path d="M19.500 11.500q4 2.500 9-.5l-1.800 8q-4 2.500-8.500 0Z" fill="#8cc63f" />
        <path d="M8 20.500q4-2.500 8-.3l-1.500 7.500q-4-2.200-8 .3Z" fill="#3fa3e8" />
        <path d="M17.800 21q4 2.400 8.400 0l-1.600 7.500q-4 2.500-8.200-.2Z" fill="#fdc72f" />
        <path d="M3 16a16 14 0 0 1 32 0q-16 5-32 0Z" fill="#fff" opacity=".25" />
      </Icon>
    </StartButton>
    <AppButton aria-label="Internet Explorer">
      <Icon size={34} box={34}>
        <path d="M29 20H12q.5 5.500 6 5.500 3.500 0 5-2.500h5.500q-2.500 7.500-10.500 7.500-11 0-11-12.500T18 6t11 14Zm-17-4h11q-.5-5-5.500-5t-5.500 5Z" fill="#7fdcfb" stroke="#2a91cf" strokeWidth=".8" />
        <path d="M4 31C-1 26 8 10 20 4q9-4 10 0 .5 2-1 5 .5-4-3-3.500C17 7 5 21 5 27q0 3 3 3-2 2-4 1Z" fill="#fcd12c" stroke="#d69a10" strokeWidth=".6" />
      </Icon>
    </AppButton>
    <AppButton $open aria-label="Windows Explorer">
      <Icon size={34} box={34}>
        <path d="M3 5h8l2 2h18v20H3Z" fill="#f0d98a" stroke="#b9973f" />
        <path d="M6 4h5v3H6Z" fill="#2aa636" /><path d="M13 6h6v3h-6Z" fill="#d6442b" /><path d="M21 8h6v3h-6Z" fill="#2f7ed0" />
        <path d="M2 11h29v18H2Z" fill="#fbeeb0" stroke="#c9a94f" />
        <path d="M6 31v-9q0-2 2-2h18q2 0 2 2v9h-4v-6H10v6Z" fill="#9fd8f3" stroke="#4d9cc4" />
      </Icon>
    </AppButton>
    <AppButton aria-label="Windows Media Player">
      <Icon size={28} box={28}>
        <path d="M9 2h16v24H9Z" fill="#7fb9de" stroke="#4c8fbc" />
        <path d="M4 3h17v22H4Z" fill="#b9dcf2" stroke="#6ea7cc" />
        <circle cx="11" cy="14" r="9.500" fill="#f47b20" stroke="#fff" />
        <path d="m8 8.500 8 5.500-8 5.500Z" fill="#fff" />
      </Icon>
    </AppButton>
    <AppButton $open aria-label="Google Chrome">
      <Icon size={31} box={30}>
        <circle cx="15" cy="15" r="14.500" fill="#fcc934" />
        <path d="M15 15 2.400 7.800A14.500 14.500 0 0 1 27.600 7.800H15Z" fill="#d93f31" />
        <path d="M2.400 7.800 8.800 18.600 15 22l-1.500 7.500A14.500 14.500 0 0 1 2.400 7.800Z" fill="#259b55" />
        <path d="m13.500 29.500 7.700-11L15 15Z" fill="#fcc934" />
        <circle cx="15" cy="15" r="7" fill="#fff" />
        <circle cx="15" cy="15" r="5.600" fill="#4687f4" />
      </Icon>
    </AppButton>
    <AppButton $open $lit aria-label="Microsoft Outlook">
      <Icon size={34} box={34}>
        <path d="M6 2h22v24H3V6Z" fill="#fff6dc" stroke="#f0a01c" strokeWidth="2" />
        <path d="M8 10h24v17H8Z" fill="#fff" stroke="#d8a54a" />
        <path d="m8 10 12 10 12-10" fill="none" stroke="#d8a54a" />
        <circle cx="19" cy="21" r="9.500" fill="#fbc73b" stroke="#c98d14" />
        <path d="m14.500 18 4.500 4.500 6-3.500" fill="none" stroke="#b3760c" strokeWidth="1.600" />
      </Icon>
    </AppButton>
    <AppButton $open $stack aria-label="4com">
      <svg width="34" height="26" viewBox="0 0 34 26">
        <path d="M17 1C8 2 1 8 2 14.500L9 15Q12 8 17 1ZM2.500 17q2 6 10.500 8l1-8.500Z" fill="#16a5ae" />
        <text x="14" y="17" fontFamily="Lato, sans-serif" fontSize="9" fill="#1f3b4c">com</text>
      </svg>
    </AppButton>
    <AppButton $open aria-label="Call manager">
      <Icon size={34} box={34}>
        <path d="M1 1h31L21 33H1Z" fill="#36006c" />
        <path d="M1 20h12v13H5Z" fill="#6c0060" />
        <path d="M11 11 14 9h19v24H11Z" fill="#000" />
        {keypad.map((fill, i) => (
          <rect key={i} x={13 + (i % 4) * 5} y={13 + Math.floor(i / 4) * 5} width="4" height="4" fill={fill} />
        ))}
      </Icon>
    </AppButton>
    <Tray>
      <button aria-label="Show hidden icons"><Arrow dir="up" w={9} color="#fff" /></button>
      <Icon size={18} box={18}>
        <path d="M6 5h11v9H6Z" fill="#1b3d60" stroke="#fff" strokeWidth="1.500" />
        <path d="M8 17h7M2 1v4M5 1v4M1 5h5v3H1ZM3.500 8v7H6" stroke="#fff" strokeWidth="1.400" fill="none" />
      </Icon>
      <Icon size={17} box={17}>
        <path d="M1 5h3l5-4v14l-5-4H1Z" fill="#fff" stroke="#999" strokeWidth=".5" />
        <circle cx="12" cy="11.500" r="4.200" fill="#fff" stroke="#d8201c" strokeWidth="1.800" />
        <path d="m9 8.500 6 6" stroke="#d8201c" strokeWidth="1.800" />
      </Icon>
      <Clock>15:58<br />07/12/2018</Clock>
      <ShowDesktop aria-label="Show desktop" />
    </Tray>
  </TaskBar>
)

const ToolStrip = () => (
  <ToolRow>
    <Toolbar>
      <Grip $gap={2} />
      <Tool>
        <Icon>
          <path d="M5 3 11 .5l3 1V12H5Z" fill="#fff" stroke="#5a6b88" />
          <path d="M.6 7h9v8h-9Z" fill="#dfe8f5" stroke="#5a6b88" />
          <path d="M9 5h6v9H9Z" fill="#f4f7fb" stroke="#5a6b88" />
          <path d="M12 6.500h2v2h-2Z" fill="#d6442b" />
          <path d="M2 9.500h5M2 12h5" stroke="#6d8cc0" />
        </Icon>
        <span><u>N</u>ew</span>
      </Tool>
      <Tool aria-label="New item menu"><Arrow /></Tool>
      <Sep />
      <Tool aria-label="Print">
        <Icon>
          <path d="M4 1h8v6H4Z" fill="#fff" stroke="#777" />
          <path d="M.8 6h14.400v6.500H.8Z" fill="#b7babf" stroke="#4b4f57" />
          <path d="M3.500 10.500h9V15h-9Z" fill="#f8f0c8" stroke="#666" />
          <path d="M11.500 8h2" stroke="#3a3" strokeWidth="1.400" />
        </Icon>
      </Tool>
      <Tool aria-label="Move to Folder">
        <Icon>
          <path d="M1 1.500h6l2 2V12H1Z" fill="#fff" stroke="#6d7c96" />
          <path d="M9 1.500q4-1 5 3l1.500-.5-2 2.500-2-2L13 4" fill="none" stroke="#39507c" />
          <path d="M5 7h4l1 1h5.500v7.500H5Z" fill="#f0c458" stroke="#a37b1c" />
        </Icon>
      </Tool>
      <Tool aria-label="Delete" $m={5}>
        <Icon size={15}><path d="M1.500 2q6 5 12.500 12.500M14 1.500Q6.500 7 2 14.500" fill="none" stroke="#333" strokeWidth="2" /></Icon>
      </Tool>
      <Sep />
      <Tool><ActionMail /><span><u>R</u>eply</span></Tool>
      <Tool $m={5}><ActionMail kind="all" /><span>Reply to A<u>l</u>l</span></Tool>
      <Tool $m={5}><ActionMail kind="forward" /><span>For<u>w</u>ard</span></Tool>
      <Sep />
      <Tool aria-label="Categorize" $m={4}>
        <Icon>
          <path d="M.5.500h6.500v6.500H.5Z" fill="#ef6a5c" stroke="#c93c30" /><path d="M9 .5h6.500v6.500H9Z" fill="#f8b850" stroke="#d68b1c" />
          <path d="M.5 9h6.500v6.500H.5Z" fill="#86cf5c" stroke="#4f9f2c" /><path d="M9 9h6.500v6.500H9Z" fill="#7aa4ef" stroke="#3f6fd0" />
        </Icon>
      </Tool>
      <Tool aria-label="Follow Up" $m={4}><Flag /></Tool>
      <Sep />
      <Tool $m={2}>
        <Icon>
          <path d="M5 .5h10.500v7H5Z" fill="#fff" stroke="#6d7c96" />
          <path d="M3 8.500h12v7H3Z" fill="#eef3fb" stroke="#6d7c96" />
          <path d="M12 2h2v2h-2ZM12 10h2v2h-2Z" fill="#d6442b" />
          <path d="M0 3h4M1 6h3M7 4h3M5 12h4M5 14h6" stroke="#5c80c0" />
        </Icon>
        <span>Send/Re<u>c</u>eive</span>
      </Tool>
      <Tool aria-label="Send/Receive menu" $m={4}><Arrow /></Tool>
      <Tool aria-label="Find" $m={2}>
        <Icon>
          <path d="M1 5h5l1 1.500h7V15H1Z" fill="#f3cd68" stroke="#9c7620" />
          <path d="m3 8 2 7h9l2-6Z" fill="#fbe29a" stroke="#9c7620" />
          <circle cx="9" cy="4" r="3" fill="#cfe4ff" stroke="#555" />
        </Icon>
      </Tool>
      <Sep />
      <Tool aria-label="Address Book" $m={1}>
        <Icon>
          <path d="M.8 2.500Q5 1 8 3.500 11 1 15.200 2.500V14Q11 12.500 8 15 5 12.500.8 14Z" fill="#e8f0fa" stroke="#2f5488" strokeWidth="1.300" />
          <path d="M8 3.500V15M10 5h4M10 7.500h4M10 10h4M2.500 5H6M2.500 7.500H6" stroke="#4a78bd" />
        </Icon>
      </Tool>
      <AddressBox>
        <PlainInput aria-label="Search address books" placeholder="Search address books" />
        <DropButton aria-label="Address book list"><Arrow /></DropButton>
      </AddressBox>
      <Sep />
      <Tool aria-label="Help" $m={1}>
        <Icon size={15}>
          <circle cx="8" cy="8" r="7.300" fill="#dfeafc" stroke="#5f7fb4" />
          <circle cx="8" cy="8" r="5.600" fill="#2c60d2" />
          <path d="M6 6.500Q6 4.500 8 4.500t2 1.800q0 1-1 1.700T8 9.500M8 10.800v1.400" fill="none" stroke="#fff" strokeWidth="1.500" />
        </Icon>
      </Tool>
      <Overflow aria-label="Toolbar options">
        <svg width="7" height="8" viewBox="0 0 7 8"><path d="M.5 1h6M0 4h7L3.500 7.500Z" stroke="#000" strokeWidth=".6" /></svg>
      </Overflow>
    </Toolbar>
  </ToolRow>
)

export default function App() {
  return (
    <Window>
      <GlobalStyle />
      <TitleBar>
        <Title>
          <Icon size={17}>
            <path d="M1 1h10v13H1Z" fill="#fff3d0" stroke="#f0a01c" />
            <path d="M4 4h11v9H4Z" fill="#fff" stroke="#d8a54a" />
            <circle cx="9" cy="9.500" r="5.500" fill="#fbc73b" stroke="#b98416" />
            <path d="m6.500 8 2.500 3 3.500-2.500" fill="none" stroke="#8a5a08" strokeWidth="1.200" />
          </Icon>
          Warranty - Inbox in Warranty - Microsoft Outlook
        </Title>
        <WindowButtons>
          <WindowButton aria-label="Minimize">
            <svg width="13" height="13" viewBox="0 0 13 13"><path d="M1 7h11v4H1Z" fill="#fff" stroke="#445" /></svg>
          </WindowButton>
          <WindowButton aria-label="Restore">
            <svg width="13" height="13" viewBox="0 0 13 13"><path d="M4 1h8v8H4Z" fill="none" stroke="#fff" strokeWidth="1.500" /><path d="M1.500 4h7.500v8H1.500Z" fill="#fff" stroke="#445" strokeWidth=".6" /><path d="M4 6.500h2.500v3H4Z" fill="#445" /></svg>
          </WindowButton>
          <WindowButton $close aria-label="Close window">
            <svg width="13" height="13" viewBox="0 0 13 13"><path d="m2.500 2.500 8 8M10.500 2.500l-8 8" stroke="#533" strokeWidth="4" /><path d="m2.500 2.500 8 8M10.500 2.500l-8 8" stroke="#fff" strokeWidth="2.600" /></svg>
          </WindowButton>
        </WindowButtons>
      </TitleBar>
      <MenuRow>
        <Menu>
          <Grip $gap={-5} />
          {menus.map(([k, rest]) => <button key={k}><span><u>{k}</u>{rest}</span></button>)}
        </Menu>
        <HelpBox>
          <PlainInput aria-label="Type a question for help" placeholder="Type a question for help" />
          <DropButton aria-label="Help topics"><Arrow w={6} /></DropButton>
        </HelpBox>
      </MenuRow>
      <ToolStrip />
      <Panes>
        <NavigationPane />
        <MessageList />
        <ReadingPane />
        <TodoBar />
      </Panes>
      <StatusBar>
        <ItemCount>13 Items</ItemCount>
        <Sep />
        <Grow />
        All folders are up to date.
        <Sep />
        <StatusButton>
          <Icon>
            <path d="M.5.500h15v15H.5Z" fill="#fff" stroke="#999" />
            <path d="M3 3.500h2q2 0 3 2.500t3 2.500h2M3 8h2q2 0 3 2.300t3 2.500h2" stroke="#666" strokeWidth="1.900" fill="none" />
            <path d="M13 3.500h-2q-2 0-3 2.500T5 8.500H3M13 8h-2q-2 0-3 2.300t-3 2.500H3" stroke="#d8281c" strokeWidth="1.900" fill="none" />
          </Icon>
          Online with Microsoft Exchange
          <Arrow w={6} color="#15285a" />
        </StatusButton>
        <Sep />
      </StatusBar>
      <WindowsTaskBar />
    </Window>
  )
}
